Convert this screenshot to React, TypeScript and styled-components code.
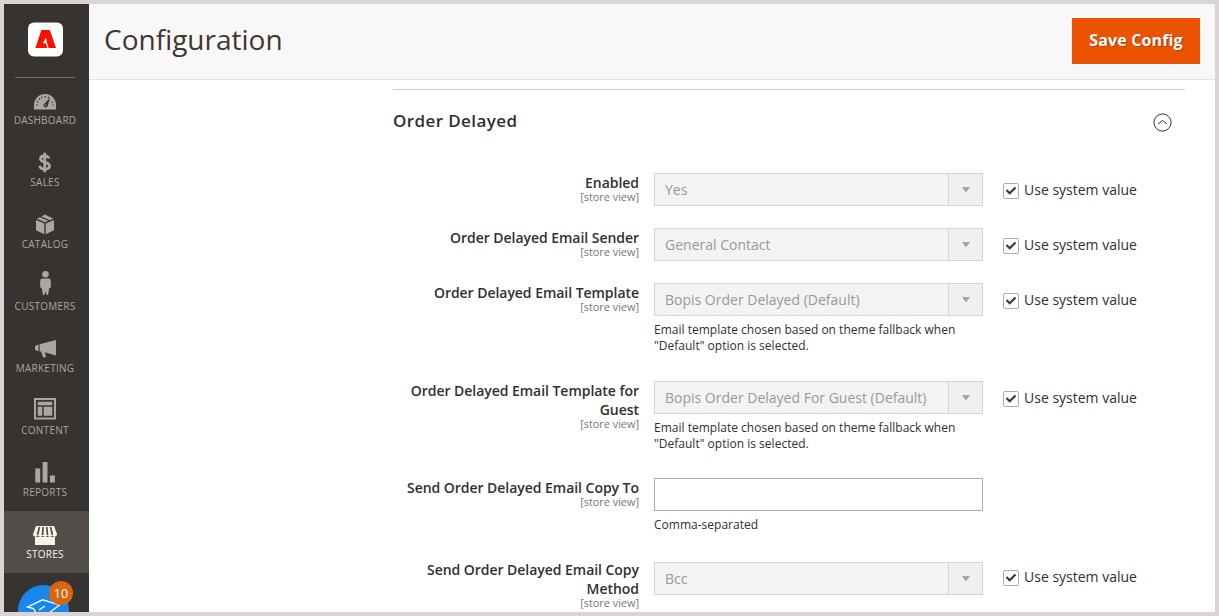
import React from 'react';
import styled, { createGlobalStyle } from 'styled-components';

const GlobalStyle = createGlobalStyle`
  *, *::before, *::after { box-sizing: border-box; }
  body {
    margin: 0;
    font-family: 'Open Sans', 'Noto Sans', sans-serif;
    font-size: 14px;
    color: #303030;
  }
`;

const Frame = styled.div`
  display: flex;
  height: 616px;
  border: 4px solid #d9d5d4;
  background: #fff;
  overflow: hidden;
`;

const Sidebar = styled.nav`
  display: flex;
  flex-direction: column;
  flex: none;
  width: 85px;
  height: 608px;
  overflow: hidden;
  background: #373330;
`;

const LogoArea = styled.div`
  display: flex;
  flex: none;
  height: 74px;
  margin: 0 14px -1px 11px;
  padding: 18px 0 0 13px;
  border-bottom: 1px solid #736963;
`;

const NavItem = styled.a<{ $active?: boolean }>`
  display: flex;
  flex: none;
  flex-direction: column;
  align-items: center;
  height: 62px;
  padding: 10px 3px 0 0;
  background: ${p => (p.$active ? '#524d49' : 'transparent')};
  color: ${p => (p.$active ? '#f7f3eb' : '#aaa6a0')};
`;

const NavIcon = styled.svg`
  width: 30px;
  height: 26px;
  overflow: visible;
  fill: currentColor;
`;

const NavLabel = styled.span`
  height: 14px;
  font-size: 10px;
  line-height: 14px;
  letter-spacing: 0.25px;
  white-space: nowrap;
`;

const Help = styled.div`
  position: relative;
  flex: none;
  width: 51px;
  height: 51px;
  margin: 12px 0 0 14px;
  border-radius: 50%;
  background: #1787ee;
`;

const HelpBadge = styled.span`
  position: absolute;
  top: -4px;
  left: 31px;
  width: 24px;
  height: 24px;
  border-radius: 50%;
  background: #d9660f;
  color: #fff;
  font-size: 12.5px;
  line-height: 25px;
  text-align: center;
`;

const Main = styled.main`
  flex: 1;
  min-width: 0;
  overflow: hidden;
`;

const Header = styled.header`
  display: flex;
  align-items: flex-start;
  justify-content: space-between;
  height: 76px;
  padding: 14px 15px 0 15px;
  border-bottom: 1px solid #e3e3e3;
  background: #f8f8f8;
`;

const Title = styled.h1`
  margin: 1px 0 0;
  color: #41362f;
  font-size: 28px;
  font-weight: 400;
  line-height: 40px;
`;

const SaveButton = styled.button`
  width: 128px;
  height: 46px;
  padding: 0 0 2px;
  border: 0;
  background: #eb5202;
  color: #fff;
  font: 700 16px/44px 'Open Sans', sans-serif;
  letter-spacing: 0.15px;
  text-shadow: 1px 1px 0 rgba(0, 0, 0, 0.25);
`;

const Section = styled.section`
  width: 792px;
  margin: 9px 0 0 304px;
  border-top: 1px solid #ccc;
`;

const SectionHead = styled.div`
  display: flex;
  align-items: flex-start;
  justify-content: space-between;
  height: 83px;
  padding: 19px 13px 0 0;
`;

const SectionTitle = styled.h2`
  margin: 0;
  font-size: 17px;
  font-weight: 600;
  line-height: 24px;
  letter-spacing: 0.4px;
`;

const Collapse = styled.svg`
  width: 19px;
  height: 19px;
  margin-top: 3.5px;
  fill: none;
  stroke: #303030;
`;

const FormRow = styled.div<{ $height: number }>`
  display: grid;
  grid-template-columns: 246px 329px 1fr;
  column-gap: 15px;
  align-items: start;
  height: ${p => p.$height}px;
`;

const Label = styled.div<{ $raise: number }>`
  margin-top: ${p => -p.$raise}px;
  text-align: right;
`;

const LabelText = styled.span`
  display: block;
  font-weight: 600;
  line-height: 19px;
  letter-spacing: -0.04px;
`;

const Scope = styled.span`
  display: block;
  margin-top: -1px;
  color: #777;
  font-size: 11px;
  line-height: 12px;
  letter-spacing: -0.06px;
`;

const Field = styled.div`
  width: 329px;
`;

const Select = styled.div`
  display: flex;
  height: 33px;
  border: 1px solid #d4d4d4;
  background: #f3f3f3;
  color: #999;
  line-height: 32px;
`;

const SelectValue = styled.span`
  flex: 1;
  padding-left: 10px;
  white-space: nowrap;
`;

const SelectArrow = styled.span`
  display: flex;
  align-items: center;
  justify-content: center;
  width: 35px;
  margin-right: -1px;
  border: solid #d4d4d4;
  border-width: 0 1px;
  background: #f0f0f0;
`;

const TextInput = styled.input`
  display: block;
  width: 329px;
  height: 33px;
  border: 1px solid #adadad;
  background: #fff;
`;

const Note = styled.p`
  margin: 6px 0 0;
  font-size: 12px;
  line-height: 16px;
  letter-spacing: 0.01px;
`;

const SystemValue = styled.label<{ $raise: number }>`
  display: flex;
  align-items: center;
  gap: 5px;
  height: 33px;
  margin-top: ${p => -p.$raise}px;
  padding-left: 5px;
  white-space: nowrap;
`;

const CheckBox = styled.span`
  display: flex;
  width: 16px;
  height: 16px;
  margin-top: 3px;
  border: 1px solid #adadad;
  border-radius: 2px;
  background: #fff;
`;

const icons: Record<string, React.ReactNode> = {
  DASHBOARD: (
    <>
      <path d="M4 22.5V18a11 11 0 0 1 22 0v4.5z" />
      <path d="M7 18.5a8 8 0 0 1 13-7M22 14.5a8 8 0 0 1 1 4" fill="none" stroke="#373330" strokeWidth="1.4" strokeDasharray="1.3 1.9" />
      <path d="M20 10.8l-2.4 8.4a2.2 2.2 0 0 1-4-1.8z" fill="#373330" />
      <circle cx="15.5" cy="18.3" r=".8" />
    </>
  ),
  SALES: (
    <path d="M19 9.4C18.4 7.6 17 6.8 14.7 6.8c-2.5 0-4.2 1-4.2 3 0 4.8 9 2.2 9 7 0 2.2-1.9 3.4-4.6 3.4-2.8 0-4.7-1.1-5.2-3.5M14.7 3.8v19.4" fill="none" stroke="currentColor" strokeWidth="2.8" />
  ),
  CATALOG: (
    <>
      <path d="M6 9l8.3 3.4v10.8L6 19.3zM24 9l-8.3 3.4v10.8l8.3-3.9z" />
      <path d="M6.7 7.7l3.2-1.5 8.3 3.5-3.2 1.5zM11.4 5.4l3.5-1.8 8.5 4.1-3.5 1.5z" />
    </>
  ),
  CUSTOMERS: (
    <>
      <circle cx="15.5" cy="1.3" r="3.3" />
      <path d="M12.5 5.5h6q2.3 0 2.3 2.3v6.5l-1.5 1-.5 2-.7 4.7h-1.4l-1.2-3.5-1.2 3.5h-1.4l-.7-4.7-.5-2-1.5-1V7.8q0-2.3 2.3-2.3z" />
    </>
  ),
  MARKETING: (
    <path d="M26 5v15.5l-11.3-3.2 1.3 4.5-2.6 1.2-2.3-6.5H9.6V9.3zM8.500 9.700v6.200H7.3L5 14.600v-3.300l2.300-1.600z" />
  ),
  CONTENT: (
    <>
      <path d="M4 1h22v21.5H4zM6 3v17.5h18V3z" fillRule="evenodd" />
      <path d="M7.700 4.700h14.600v3.500H7.700zM7.700 9.800h4.500v9H7.700zM13.700 9.800h8.600v9h-8.600z" />
    </>
  ),
  REPORTS: <path d="M5.300 9.500h4.900v14H5.300zM12.600 3h4.900v20.500h-4.900zM20 16.500h4.900v7H20z" />,
  STORES: (
    <>
      <path d="M6 5h18l3 8c0 3-3.500 3.600-4.800 1.600-1.200 1.800-3.800 1.800-4.800 0-1.200 1.800-3.600 1.800-4.800 0-1 1.800-3.600 1.800-4.800 0C6.500 16.600 3 16 3 13zM5 16h20v8H5z" />
      <path d="M9.400 6L7.600 14M13.200 6l-.7 8M16.800 6l.7 8M20.600 6l1.800 8" fill="none" stroke="#524d49" strokeWidth="1.700" />
    </>
  ),
};

type FieldRow = {
  label: string;
  value?: string;
  note?: string;
  height: number;
  raise?: number;
};

const TEMPLATE_NOTE = 'Email template chosen based on theme fallback when "Default" option is selected.';

const rows: FieldRow[] = [
  { label: 'Enabled', value: 'Yes', height: 55 },
  { label: 'Order Delayed Email Sender', value: 'General Contact', height: 55 },
  { label: 'Order Delayed Email Template', value: 'Bopis Order Delayed (Default)', note: TEMPLATE_NOTE, height: 98 },
  { label: 'Order Delayed Email Template for Guest', value: 'Bopis Order Delayed For Guest (Default)', note: TEMPLATE_NOTE, height: 97 },
  { label: 'Send Order Delayed Email Copy To', note: 'Comma-separated', height: 84 },
  { label: 'Send Order Delayed Email Copy Method', value: 'Bcc', height: 60, raise: 2 },
];

function Logo() {
  return (
    <svg width="35" height="35" viewBox="0 0 35 35">
      <rect y=".5" width="35" height="34" rx="6" fill="#fff" />
      <path d="M13.400 8h8.400l6.200 18h-7.400l-1.600-5-1-5.500-3.200 5.700h2.900l1.700 4.800H7.400z" fill="#fa0f00" />
    </svg>
  );
}

export default function App() {
  return (
    <Frame>
      <GlobalStyle />
      <Sidebar>
        <LogoArea><Logo /></LogoArea>
        {Object.keys(icons).map(name => (
          <NavItem key={name} $active={name === 'STORES'}>
            <NavIcon viewBox="0 0 30 26">{icons[name]}</NavIcon>
            <NavLabel>{name}</NavLabel>
          </NavItem>
        ))}
        <Help>
          <svg width="51" height="51" viewBox="0 0 51 51" fill="none" stroke="#fff" strokeWidth="1.300">
            <path d="M18 28l-2.500-4.500-6-1.500 15.200-7.200L41.500 20 31 28M27 21l-6 4" />
          </svg>
          <HelpBadge>10</HelpBadge>
        </Help>
      </Sidebar>
      <Main>
        <Header>
          <Title>Configuration</Title>
          <SaveButton>Save Config</SaveButton>
        </Header>
        <Section>
          <SectionHead>
            <SectionTitle>Order Delayed</SectionTitle>
            <Collapse viewBox="0 0 19 19">
              <circle cx="9.500" cy="9.500" r="8.600" />
              <path d="M5 11l4.500-3.500L14 11" />
            </Collapse>
          </SectionHead>
          {rows.map(row => (
            <FormRow key={row.label} $height={row.height}>
              <Label $raise={row.raise ?? 0}>
                <LabelText>{row.label}</LabelText>
                <Scope>[store view]</Scope>
              </Label>
              <Field>
                {row.value ? (
                  <Select>
                    <SelectValue>{row.value}</SelectValue>
                    <SelectArrow>
                      <svg width="8" height="6" viewBox="0 0 8 6"><path d="M0 0h8L4 5.500z" fill="#a6a29e" /></svg>
                    </SelectArrow>
                  </Select>
                ) : (
                  <TextInput />
                )}
                {row.note && <Note>{row.note}</Note>}
              </Field>
              {row.value && (
                <SystemValue $raise={row.raise ?? 0}>
                  <CheckBox>
                    <svg width="14" height="14" viewBox="0 0 14 14" fill="none" stroke="#41362f" strokeWidth="2.200">
                      <path d="M2.500 6l3.200 3.200 5.800-5.700" />
                    </svg>
                  </CheckBox>
                  Use system value
                </SystemValue>
              )}
            </FormRow>
          ))}
        </Section>
      </Main>
    </Frame>
  );
}
